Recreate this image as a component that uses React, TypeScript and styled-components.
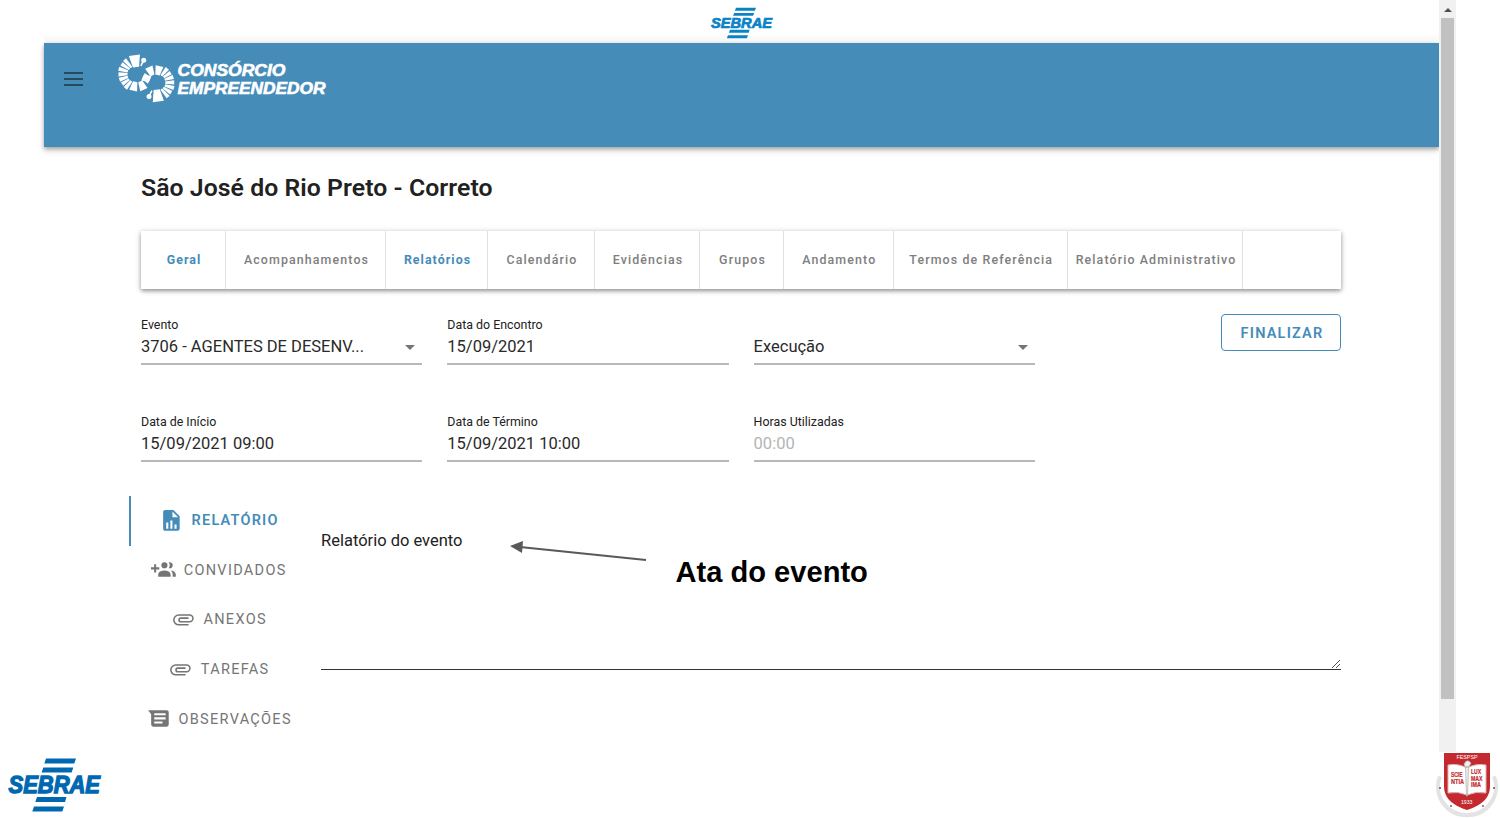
import React from 'react';
import styled, { createGlobalStyle } from 'styled-components';

const BLUE = '#458cb9';

const Global = createGlobalStyle`
  *{box-sizing:border-box}
  body{margin:0;background:#fff;font-family:Roboto,"Liberation Sans",sans-serif;color:#212121}
`;
const Slide = styled.div`position:relative;width:1500px;height:818px;overflow:hidden;background:#fff;`;
const Browser = styled.div`display:flex;margin-left:44px;width:1412px;height:752px;`;
const Page = styled.div`width:1395px;flex:none;`;
const TopStrip = styled.div`height:43px;display:flex;justify-content:center;padding-top:7px;background:linear-gradient(#fff 33px,#f5f5f5);`;
const AppBar = styled.header`height:104px;display:flex;align-items:flex-start;background:${BLUE};box-shadow:0 2px 4px rgba(0,0,0,.28),0 4px 6px rgba(0,0,0,.12);`;
const Menu = styled.div`display:flex;flex-direction:column;gap:4px;width:19px;margin:28.5px 34.5px 0 19.5px;span{height:2px;background:#264a60}`;
const BrandMark = styled.svg`margin:11px 0 0 1px;`;
const SebraeMark = styled.svg`display:block;overflow:visible;`;
const Main = styled.main`padding:26px 98px 0 97px;`;
const Title = styled.h1`margin:0;height:58px;font-size:24.8px;line-height:30px;font-weight:600;letter-spacing:.05px;white-space:nowrap;`;
const Tabs = styled.nav`display:flex;height:58px;background:#fff;box-shadow:0 2px 4px rgba(0,0,0,.35),0 1px 7px rgba(0,0,0,.14);`;
const Tab = styled.div<{ $w: number; $on?: boolean }>`width:${p => p.$w}px;flex:none;display:flex;align-items:center;justify-content:center;padding:0 0 2px 2px;border-right:1px solid #e0e0e0;font-size:12.4px;font-weight:${p => (p.$on ? 700 : 500)};letter-spacing:${p => (p.$on ? 1.05 : 1.12)}px;white-space:nowrap;color:${p => (p.$on ? BLUE : '#7e7e7e')};`;
const Row = styled.div<{ $top: number }>`display:flex;gap:25px;margin-top:${p => p.$top}px;height:48px;`;
const Field = styled.div`width:281.3px;height:48px;border-bottom:2px solid #b8b8b8;`;
const Label = styled.div`height:17px;font-size:12.4px;line-height:16px;white-space:nowrap;`;
const Value = styled.div<{ $muted?: boolean }>`display:flex;align-items:center;justify-content:space-between;height:26px;font-size:16.5px;line-height:26px;padding-right:7px;white-space:nowrap;color:${p => (p.$muted ? '#b4b4b4' : '#2a2a2a')};`;
const Caret = styled.i`border:5px solid transparent;border-top-color:#757575;border-bottom:0;`;
const Finish = styled.button`margin:-3px 0 0 auto;width:120px;height:37px;padding:1px 0 0 2px;border:1px solid ${BLUE};border-radius:4px;background:#fff;color:${BLUE};font:600 14.5px Roboto,sans-serif;letter-spacing:1.2px;`;
const Lower = styled.section`display:flex;margin:34px 0 0 -12px;`;
const Side = styled.nav`width:181px;margin-right:11px;`;
const SideItem = styled.div<{ $on?: boolean }>`height:49.6px;display:flex;align-items:center;justify-content:center;gap:8px;padding-right:3px;border-left:2px solid ${p => (p.$on ? BLUE : 'transparent')};color:${p => (p.$on ? BLUE : '#757575')};font-size:14.5px;font-weight:${p => (p.$on ? 600 : 400)};letter-spacing:${p => (p.$on ? 1.2 : 1.3)}px;white-space:nowrap;svg{margin:-1px 0 0 -.5px}`;
const Report = styled.div`position:relative;width:1020px;height:174px;border-bottom:1px solid #333;padding-top:32px;font-size:16.5px;line-height:26px;`;
const Grip = styled.svg`position:absolute;right:0;bottom:0;`;
const Scroll = styled.aside`width:17px;height:752px;background:#f1f1f1;display:flex;flex-direction:column;align-items:center;`;
const Up = styled.i`margin:8px 0 6px;border:4px solid transparent;border-bottom-color:#505050;border-top:0;`;
const Thumb = styled.div`width:13px;height:681px;background:#c1c1c1;`;
const Footer = styled.footer`display:flex;justify-content:space-between;align-items:flex-start;padding:0 2px 0 7px;`;
const FooterBrand = styled.div`padding-top:5px;`;
const Arrow = styled.svg`position:absolute;left:505px;top:535px;`;
const Note = styled.div`position:absolute;left:675.5px;top:554px;font:bold 29.1px/36px "Liberation Sans",sans-serif;color:#000;white-space:nowrap;`;

const PATHS = {
  chart: 'M13,9H18.5L13,3.5V9M6,2H14L20,8V20A2,2 0 0,1 18,22H6C4.89,22 4,21.1 4,20V4C4,2.89 4.89,2 6,2M7,20H9V14H7V20M11,20H13V12H11V20M15,20H17V16H15V20Z',
  people: 'M19 17V19H7V17S7 13 13 13 19 17 19 17M16 8A3 3 0 1 0 13 11A3 3 0 0 0 16 8M19.2 13.06A5.6 5.6 0 0 1 21 17V19H24V17S24 13.55 19.2 13.06M18 5A2.91 2.91 0 0 0 17.11 5.14A5 5 0 0 1 17.11 10.86A2.91 2.91 0 0 0 18 11A3 3 0 0 0 18 5M8 10H5V7H3V10H0V12H3V15H5V12H8Z',
  clip: 'M7.5,18A5.5,5.5 0 0,1 2,12.5A5.5,5.5 0 0,1 7.5,7H18A4,4 0 0,1 22,11A4,4 0 0,1 18,15H9.5A2.5,2.5 0 0,1 7,12.5A2.5,2.5 0 0,1 9.5,10H17V11.5H9.5A1,1 0 0,0 8.5,12.5A1,1 0 0,0 9.5,13.5H18A2.5,2.5 0 0,0 20.5,11A2.5,2.5 0 0,0 18,8.5H7.5A4,4 0 0,0 3.5,12.5A4,4 0 0,0 7.5,16.5H17V18H7.5Z',
  notes: 'M2 4H20A2 2 0 0 1 22 6V18A2 2 0 0 1 20 20H7A2 2 0 0 1 5 18V8ZM8 7V9H19V7ZM8 11V13H19V11ZM8 15V17H16V15Z',
};
const Icon = ({ d }: { d: string }) => (
  <svg width="24.8" height="24.8" viewBox="0 0 24 24"><path fill="currentColor" fillRule="evenodd" d={d} /></svg>
);

const Sebrae = ({ w, h, color, size, base }: { w: number; h: number; color: string; size: number; base: number }) => (
  <SebraeMark width={w} height={h} viewBox="0 0 96 56" preserveAspectRatio="none" fill={color}>
    <path d="M39 1.500H69L67.300 6.500H37.300ZM36.300 10.500H66.300L64.600 15.500H34.600ZM30 40H59.500L58 45H28.300ZM27 49.500H57L55.300 54.500H25.300Z" />
    <text x="1.500" y={base} fontFamily="Liberation Sans" fontWeight="bold" fontStyle="italic" fontSize={size} textLength="91.500" lengthAdjust="spacingAndGlyphs" stroke={color} strokeWidth="1.300">SEBRAE</text>
  </SebraeMark>
);

const wedge = (cx: number, cy: number, deg: number, r1: number, r2: number, w: number) => {
  const a = (deg * Math.PI) / 180;
  const p = (r: number, s: number) => `${(cx + r * Math.cos(a) - s * Math.sin(a)).toFixed(2)} ${(cy + r * Math.sin(a) + s * Math.cos(a)).toFixed(2)}`;
  return `M${p(r1, -w * 0.55)}L${p(r2, -w)}L${p(r2, w)}L${p(r1, w * 0.55)}Z`;
};
const RAYS: [number, number, number, number][] = [
  [-98, 7, 19, 5.6], [-131, 8.500, 19, 2], [-147, 9, 18.500, 2], [-164, 9.500, 19, 2.1], [179, 9.500, 18.500, 2.1], [162, 9.500, 18.500, 2.1], [146, 9.500, 18, 2], [129, 9, 18.500, 2.1], [103, 8, 17, 4], [66, 8, 17, 4], [25, 6.500, 14, 4.200],
];
const Brand = () => (
  <BrandMark width="212" height="52" viewBox="0 0 212 52" fill="#fff">
    {RAYS.map(([d, a, b, w]) => <path key={d} d={wedge(19, 20, d, a, b, w)} />)}
    {RAYS.map(([d, a, b, w]) => <path key={d} d={wedge(37.7, 28.7, d + 180, a, b, w)} />)}
    <circle cx="25.700" cy="6.300" r="2.500" /><circle cx="31" cy="42.400" r="2.500" />
    <path d="M25.700 6.300L22.800 12M31 42.400L33.900 36.700" stroke="#fff" strokeWidth="1.600" />
    <g fontFamily="Liberation Sans" fontWeight="bold" fontStyle="italic" fontSize="16.800" stroke="#fff" strokeWidth=".6">
      <text x="59.500" y="22.300" textLength="108" lengthAdjust="spacingAndGlyphs">CONSÓRCIO</text>
      <text x="59.500" y="39.800" textLength="148" lengthAdjust="spacingAndGlyphs">EMPREENDEDOR</text>
    </g>
  </BrandMark>
);
const Crest = () => (
  <svg width="62" height="66" viewBox="0 0 62 66">
    <path d="M4 20A29 28.500 0 1 0 58 20" transform="translate(0 4.300)" fill="none" stroke="#e3e3e3" strokeWidth="4" />
    <g fill="#555"><circle cx="4" cy="36" r="1" /><circle cx="58" cy="36" r="1" /><circle cx="15" cy="54" r=".9" /><circle cx="47" cy="54" r=".9" /></g>
    <path d="M8 1H54V34C54 48 43 54 31 58C19 54 8 48 8 34Z" fill="#c4292f" stroke="#fff" strokeWidth="1" paintOrder="stroke" />
    <path d="M12 13Q22 11 31 16Q40 11 50 13V41Q40 39 31 43Q22 39 12 41Z" fill="#fff" stroke="#d9b4b4" />
    <path d="M29.500 15H32.500L31.500 44H30.500ZM28 12Q31 6 35 11L33 15H29Z" fill="#eee" stroke="#aaa" strokeWidth=".7" />
    <g fontFamily="Liberation Sans" fontWeight="bold" fontSize="6.600" fill="#c4292f" stroke="#c4292f" strokeWidth=".2">
      <text x="15" y="25" textLength="11.500" lengthAdjust="spacingAndGlyphs">SCIE</text><text x="15" y="32" textLength="13" lengthAdjust="spacingAndGlyphs">NTIA</text><text x="35" y="22" textLength="10" lengthAdjust="spacingAndGlyphs">LUX</text><text x="35" y="28.500" textLength="11.500" lengthAdjust="spacingAndGlyphs">MAX</text><text x="35" y="35" textLength="10" lengthAdjust="spacingAndGlyphs">IMA</text>
    </g>
    <g fontFamily="Liberation Sans" fontSize="5.500" fill="#fff"><text x="20.500" y="7" textLength="21" lengthAdjust="spacingAndGlyphs">FESPSP</text><text x="25" y="52" textLength="11.500" lengthAdjust="spacingAndGlyphs">1933</text></g>
  </svg>
);

const TABS: [string, number, boolean?][] = [['Geral', 85, true], ['Acompanhamentos', 160], ['Relatórios', 102, true], ['Calendário', 107], ['Evidências', 105], ['Grupos', 84], ['Andamento', 109.5], ['Termos de Referência', 174.5], ['Relatório Administrativo', 175]];
const ITEMS: [string, string, boolean?][] = [['RELATÓRIO', PATHS.chart, true], ['CONVIDADOS', PATHS.people], ['ANEXOS', PATHS.clip], ['TAREFAS', PATHS.clip], ['OBSERVAÇÕES', PATHS.notes]];
const Entry = ({ label, value, select, muted }: { label?: string; value: string; select?: boolean; muted?: boolean }) => (
  <Field><Label>{label}</Label><Value $muted={muted}><span>{value}</span>{select && <Caret />}</Value></Field>
);

export default function App() {
  return (
    <>
      <Global />
      <Slide>
        <Browser>
          <Page>
            <TopStrip><Sebrae w={64} h={32} color="#0a83c6" size={26} base={37} /></TopStrip>
            <AppBar><Menu><span /><span /><span /></Menu><Brand /></AppBar>
            <Main>
              <Title>São José do Rio Preto - Correto</Title>
              <Tabs>{TABS.map(([t, w, on]) => <Tab key={t} $w={w} $on={on}>{t}</Tab>)}</Tabs>
              <Row $top={28}>
                <Entry label="Evento" value="3706 - AGENTES DE DESENV..." select />
                <Entry label="Data do Encontro" value="15/09/2021" />
                <Entry value="Execução" select />
                <Finish>FINALIZAR</Finish>
              </Row>
              <Row $top={49}>
                <Entry label="Data de Início" value="15/09/2021 09:00" />
                <Entry label="Data de Término" value="15/09/2021 10:00" />
                <Entry label="Horas Utilizadas" value="00:00" muted />
              </Row>
              <Lower>
                <Side>{ITEMS.map(([t, d, on]) => <SideItem key={t} $on={on}><Icon d={d} />{t}</SideItem>)}</Side>
                <Report>Relatório do evento<Grip width="10" height="10"><path d="M1 9L9 1M5 9L9 5" stroke="#555" /></Grip></Report>
              </Lower>
            </Main>
          </Page>
          <Scroll><Up /><Thumb /></Scroll>
        </Browser>
        <Footer><FooterBrand><Sebrae w={96} h={56} color="#0068b0" size={23.5} base={36.3} /></FooterBrand><Crest /></Footer>
        <Arrow width="145" height="30"><path d="M15 12L141 25" stroke="#595959" strokeWidth="2" /><path d="M5 11L18 6L17 18Z" fill="#595959" /></Arrow>
        <Note>Ata do evento</Note>
      </Slide>
    </>
  );
}
